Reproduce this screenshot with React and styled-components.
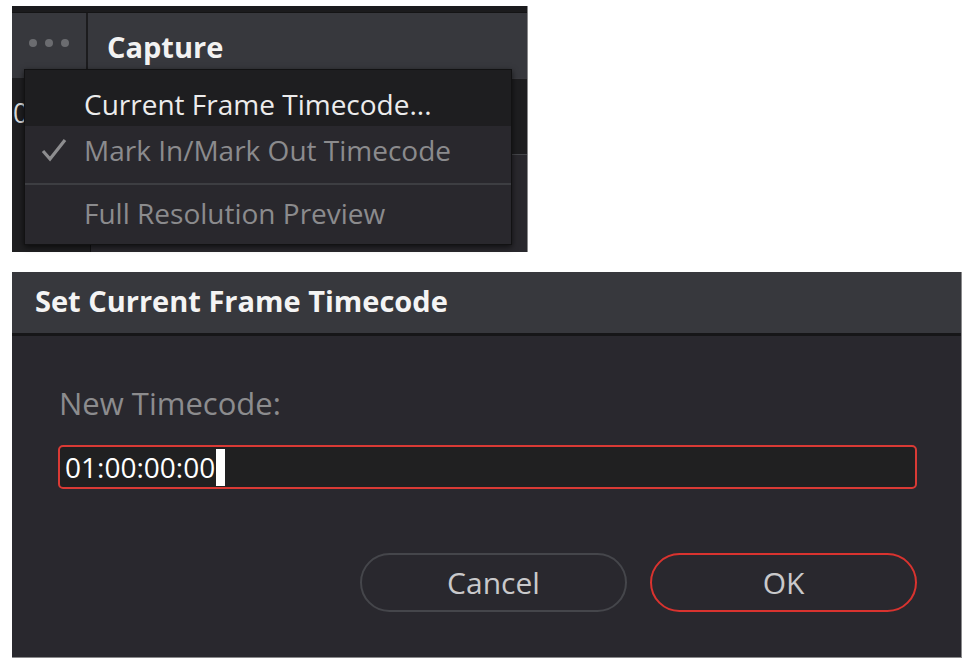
import React from "react";
import styled, { createGlobalStyle } from "styled-components";

const GlobalStyle = createGlobalStyle`
  html, body {
    margin: 0;
    padding: 0;
    background: #ffffff;
  }
  body {
    font-family: "Open Sans", "Liberation Sans", sans-serif;
  }
`;

const App = () => {
  return (
    <Page>
      <GlobalStyle />

      {/* capture panel with its option menu open */}
      <CapturePanel>
        <TopStrip />
        <Header>
          <DotsCell>
            <Dot />
            <Dot />
            <Dot />
          </DotsCell>
          <HeaderTitle>Capture</HeaderTitle>
        </Header>
        <PanelBody>
          <SideColumn>
            <ViewerTimecode>01:00</ViewerTimecode>
          </SideColumn>
          <MainColumn>
            <TimecodeBar />
          </MainColumn>

          <Menu>
            <MenuItem active height={56} pt={12} pb={0}>
              <CheckSlot />
              Current Frame Timecode...
            </MenuItem>
            <MenuItem height={57} pt={0} pb={9}>
              <CheckSlot>
                <svg width="26" height="24" viewBox="0 0 26 24">
                  <polyline
                    points="2,13 9,21 24,2"
                    fill="none"
                    stroke="#8d8d8f"
                    strokeWidth="3.2"
                  />
                </svg>
              </CheckSlot>
              Mark In/Mark Out Timecode
            </MenuItem>
            <MenuDivider />
            <MenuItem height={59} pt={0} pb={4}>
              <CheckSlot />
              Full Resolution Preview
            </MenuItem>
          </Menu>
        </PanelBody>
      </CapturePanel>

      {/* timecode dialog */}
      <Dialog>
        <DialogTitle>Set Current Frame Timecode</DialogTitle>
        <DialogBody>
          <FieldLabel>New Timecode:</FieldLabel>
          <TimecodeInput>
            01:00:00:00
            <Caret />
          </TimecodeInput>
          <ButtonRow>
            <PillButton>Cancel</PillButton>
            <PillButton primary>OK</PillButton>
          </ButtonRow>
        </DialogBody>
      </Dialog>
    </Page>
  );
};

export default App;

const Page = styled.div`
  display: flex;
  flex-direction: column;
  align-items: flex-start;
  gap: 20px;
  padding: 6px 0 0 12px;
`;

const CapturePanel = styled.div`
  position: relative;
  width: 516px;
  height: 246px;
  display: flex;
  flex-direction: column;
  background: #29282d;
  border-right: 1px solid #8a8a8c;
  box-sizing: border-box;
`;

const TopStrip = styled.div`
  height: 6px;
  background: #1b1b1d;
  border-bottom: 1px solid #141415;
`;

const Header = styled.div`
  height: 65px;
  display: flex;
  background: #37383d;
`;

const DotsCell = styled.div`
  width: 76px;
  display: flex;
  align-items: center;
  justify-content: center;
  gap: 8px;
  padding-bottom: 6px;
  border-right: 2px solid #1c1c1e;
  box-sizing: border-box;
`;

const Dot = styled.span`
  width: 8px;
  height: 8px;
  border-radius: 50%;
  background: #6b6c70;
`;

const HeaderTitle = styled.div`
  padding: 14px 0 0 19px;
  font-size: 29px;
  font-weight: 700;
  color: #f2f2f2;
`;

const PanelBody = styled.div`
  flex: 1;
  display: flex;
`;

const SideColumn = styled.div`
  width: 78px;
  background: #1f1f21;
  border-right: 1px solid #111112;
  overflow: hidden;
`;

const ViewerTimecode = styled.div`
  padding: 16px 0 0 1px;
  font-size: 27px;
  color: #d9d9d9;
  white-space: nowrap;
`;

const MainColumn = styled.div`
  flex: 1;
  display: flex;
  flex-direction: column;
`;

const TimecodeBar = styled.div`
  height: 75px;
  background: #1e1e20;
  border-top: 1px solid #3a3a3f;
  border-bottom: 1px solid #45464a;
`;

const Menu = styled.div`
  position: absolute;
  left: 12px;
  top: 63px;
  width: 488px;
  height: 176px;
  box-sizing: border-box;
  display: flex;
  flex-direction: column;
  background: #29282d;
  border: 1px solid #121213;
  box-shadow: 0 2px 6px rgba(0, 0, 0, 0.65);
`;

const MenuItem = styled.div`
  height: ${(p) => p.height}px;
  padding: ${(p) => p.pt}px 0 ${(p) => p.pb}px;
  box-sizing: border-box;
  display: flex;
  align-items: center;
  font-size: 28px;
  white-space: nowrap;
  color: ${(p) => (p.active ? "#ececec" : "#8b8b8d")};
  background: ${(p) => (p.active ? "#1e1e20" : "transparent")};
`;

const CheckSlot = styled.span`
  width: 59px;
  display: flex;
  justify-content: center;
  padding-right: 2px;
  box-sizing: border-box;
`;

const MenuDivider = styled.div`
  height: 2px;
  background: #3d3e42;
`;

const Dialog = styled.div`
  width: 950px;
  height: 386px;
  display: flex;
  flex-direction: column;
  background: #29282e;
  border-right: 1px solid #8a8a8c;
  border-bottom: 1px solid #8a8a8c;
  box-sizing: border-box;
`;

const DialogTitle = styled.div`
  height: 64px;
  box-sizing: border-box;
  padding: 9px 0 0 23px;
  background: #37383d;
  border-bottom: 3px solid #161618;
  font-size: 29px;
  font-weight: 700;
  color: #f4f4f4;
`;

const DialogBody = styled.div`
  flex: 1;
  display: flex;
  flex-direction: column;
  padding: 0 44px 0 46px;
`;

const FieldLabel = styled.div`
  margin: 49px 0 0 1px;
  font-size: 31px;
  line-height: 36px;
  color: #8c8c8e;
`;

const TimecodeInput = styled.div`
  margin-top: 24px;
  height: 44px;
  box-sizing: border-box;
  display: flex;
  align-items: center;
  padding-left: 5px;
  background: #202021;
  border: 2px solid #d93a35;
  border-radius: 5px;
  font-size: 28px;
  color: #ffffff;
`;

const Caret = styled.span`
  width: 9px;
  height: 37px;
  margin-left: 1px;
  background: #ffffff;
`;

const ButtonRow = styled.div`
  display: flex;
  justify-content: flex-end;
  gap: 23px;
  margin-top: 64px;
`;

const PillButton = styled.button`
  width: 267px;
  height: 59px;
  border-radius: 30px;
  background: transparent;
  border: 2px solid ${(p) => (p.primary ? "#d9332f" : "#45464b")};
  font-family: "Open Sans", "Liberation Sans", sans-serif;
  font-size: 30px;
  color: #c9c9cb;
  padding: 0;
`;
